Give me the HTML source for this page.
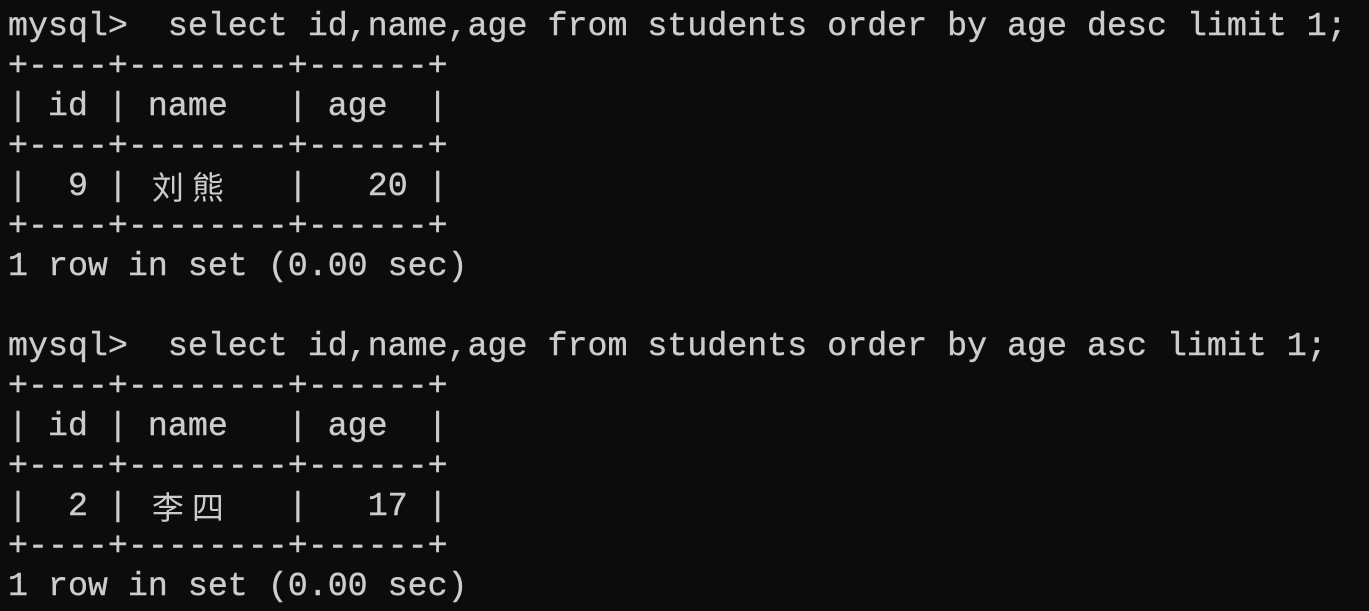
<!DOCTYPE html>
<html><head><meta charset="utf-8"><style>
html,body{margin:0;padding:0;background:#0c0c0c;width:1369px;height:611px;overflow:hidden}
pre{margin:0;padding:6px 0 0 8px;font-family:"Liberation Mono","Noto Sans CJK SC",monospace;font-size:33.3px;line-height:40px;color:#cccccc;letter-spacing:0;-webkit-text-stroke:0.4px #cccccc}
.c{display:inline-block;width:40px;text-align:center;font-family:"Noto Sans CJK SC",sans-serif;font-size:32px;line-height:40px;vertical-align:top;-webkit-text-stroke:0}
</style></head><body><pre>mysql>  select id,name,age from students order by age desc limit 1;
+----+--------+------+
| id | name   | age  |
+----+--------+------+
|  9 | <span class="c">刘</span><span class="c">熊</span>   |   20 |
+----+--------+------+
1 row in set (0.00 sec)

mysql>  select id,name,age from students order by age asc limit 1;
+----+--------+------+
| id | name   | age  |
+----+--------+------+
|  2 | <span class="c">李</span><span class="c">四</span>   |   17 |
+----+--------+------+
1 row in set (0.00 sec)
</pre></body></html>
